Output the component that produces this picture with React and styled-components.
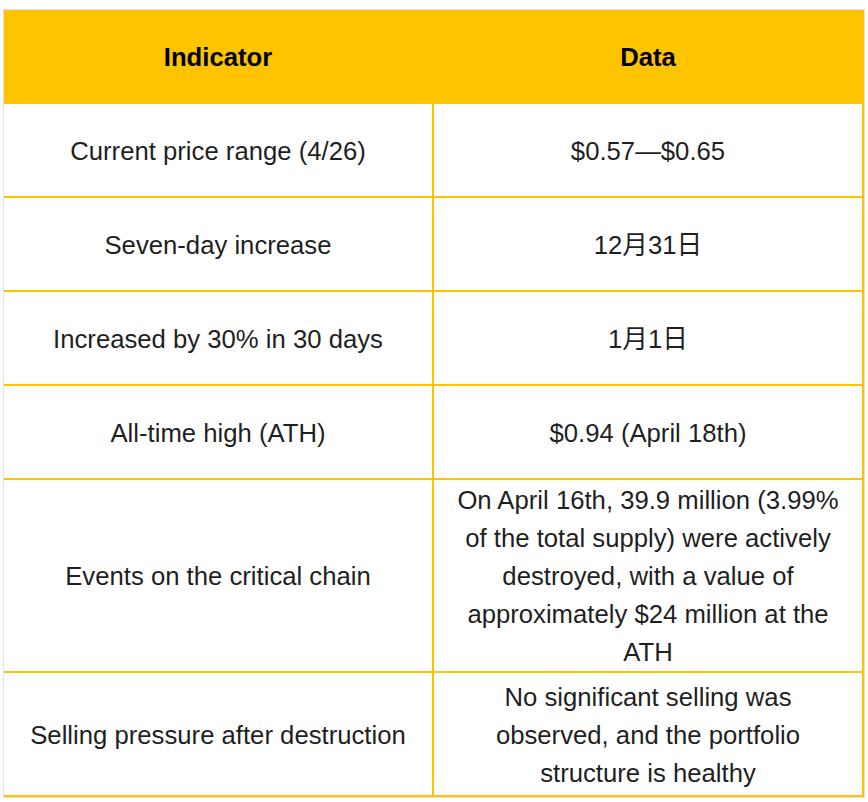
import React from 'react';
import styled, { createGlobalStyle } from 'styled-components';

const GlobalStyle = createGlobalStyle`
  html, body {
    margin: 0;
    padding: 0;
    background: #fff;
  }
  body {
    font-family: "Liberation Sans", Arial, Helvetica, sans-serif;
  }
`;

const Page = styled.div`
  padding: 9px 0 0 3px;
`;

const Table = styled.div`
  display: grid;
  grid-template-columns: 430px 430px;
  width: max-content;
  border: 1px solid #e2e2e2;
`;

const Cell = styled.div`
  box-sizing: border-box;
  min-height: ${p => p.$minHeight || 94}px;
  display: flex;
  align-items: center;
  justify-content: center;
  text-align: center;
  padding: 1px 14px 0;
  border-right: 2px solid #fec400;
  border-bottom: 2px solid #fec400;
  font-size: 25.7px;
  line-height: 38px;
  color: #1f1f1f;
`;

const HeadCell = styled(Cell)`
  background: #fec400;
  font-weight: 700;
  color: #000;
`;

const rows = [
  ['Current price range (4/26)', '$0.57—$0.65'],
  ['Seven-day increase', '12月31日'],
  ['Increased by 30% in 30 days', '1月1日'],
  ['All-time high (ATH)', '$0.94 (April 18th)'],
  [
    'Events on the critical chain',
    'On April 16th, 39.9 million (3.99% of the total supply) were actively destroyed, with a value of approximately $24 million at the ATH',
  ],
  [
    'Selling pressure after destruction',
    'No significant selling was observed, and the portfolio structure is healthy',
    124,
  ],
];

const App = () => (
  <>
    <GlobalStyle />
    <Page>
      <Table>
        <HeadCell>Indicator</HeadCell>
        <HeadCell>Data</HeadCell>
        {rows.map(([label, value, h], i) => (
          <React.Fragment key={i}>
            <Cell $minHeight={h}>{label}</Cell>
            <Cell $minHeight={h} style={{ fontFamily: '"Liberation Sans", "Noto Sans CJK SC", sans-serif' }}>
              {value}
            </Cell>
          </React.Fragment>
        ))}
      </Table>
    </Page>
  </>
);

export default App;
